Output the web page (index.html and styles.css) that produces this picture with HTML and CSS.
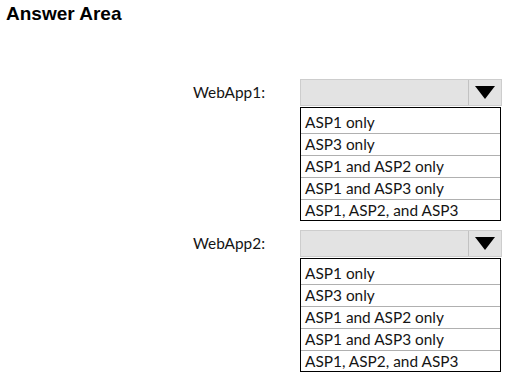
FILE: index.html
```html
<!DOCTYPE html>
<html lang="en">

<head>
    <meta charset="UTF-8">
    <meta name="viewport" content="width=device-width, initial-scale=1.0">
    <title>Answer Area</title>
    <link rel="stylesheet" href="styles.css">
</head>

<body>
    <h1 class="title">Answer Area</h1>

    <div class="answers">
        <div class="answer-row">
            <div class="label">WebApp1:</div>
            <div class="picker">
                <div class="select">
                    <div class="select-value"></div>
                    <div class="select-arrow">
                        <svg width="20" height="13" viewBox="0 0 20 13"><polygon points="0,0 20,0 10,13" fill="#000"/></svg>
                    </div>
                </div>
                <ul class="options">
                    <li>ASP1 only</li>
                    <li>ASP3 only</li>
                    <li>ASP1 and ASP2 only</li>
                    <li>ASP1 and ASP3 only</li>
                    <li>ASP1, ASP2, and ASP3</li>
                </ul>
            </div>
        </div>

        <div class="answer-row">
            <div class="label">WebApp2:</div>
            <div class="picker">
                <div class="select">
                    <div class="select-value"></div>
                    <div class="select-arrow">
                        <svg width="20" height="13" viewBox="0 0 20 13"><polygon points="0,0 20,0 10,13" fill="#000"/></svg>
                    </div>
                </div>
                <ul class="options">
                    <li>ASP1 only</li>
                    <li>ASP3 only</li>
                    <li>ASP1 and ASP2 only</li>
                    <li>ASP1 and ASP3 only</li>
                    <li>ASP1, ASP2, and ASP3</li>
                </ul>
            </div>
        </div>
    </div>
</body>

</html>
```

FILE: styles.css
```css
body {
    margin: 0;
    padding: 0 6px;
    background: #fff;
    color: #151515;
    font-family: 'Lato', sans-serif;
    font-size: 15.4px;
}

.title {
    font-family: 'Liberation Sans', Arial, sans-serif;
    font-size: 19px;
    font-weight: bold;
    line-height: 21px;
    color: #000;
    margin: 0;
    padding-top: 3px;
}

.answers {
    display: flex;
    flex-direction: column;
    gap: 9px;
    margin-top: 55px;
    margin-left: 187px;
}

.answer-row {
    display: flex;
}

.label {
    width: 107px;
    height: 27px;
    line-height: 27px;
}

.picker {
    width: 202px;
}

.select {
    display: flex;
    height: 25px;
    border: 1px solid #cdcdcd;
    background: #e3e3e3;
}

.select-value {
    flex: 1;
}

.select-arrow {
    width: 32px;
    border-left: 1px solid #c2c2c2;
    display: flex;
    align-items: center;
    justify-content: center;
}

.options {
    list-style: none;
    margin: 1px 0 0;
    padding: 4px 0 0;
    width: 199px;
    border: 1px solid #000;
}

.options li {
    line-height: 21px;
    padding-left: 4px;
    border-bottom: 1px solid #b0b0b0;
}

.options li:last-child {
    border-bottom: none;
    line-height: 20px;
}
```
